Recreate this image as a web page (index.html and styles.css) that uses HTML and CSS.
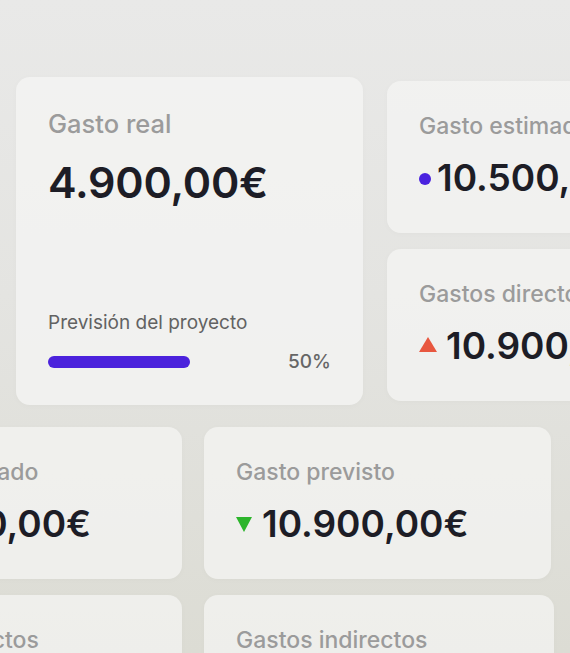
FILE: index.html
```html
<!DOCTYPE html>
<html lang="es">
<head>
<meta charset="utf-8">
<title>Gastos</title>
<link rel="stylesheet" href="styles.css">
</head>
<body>
<main class="canvas">
  <section class="row row-top">
    <article class="card card-big">
      <div class="card-head">
        <h2 class="label label-lg">Gasto real</h2>
        <p class="value value-lg">4.900,00€</p>
      </div>
      <div class="forecast">
        <p class="forecast-title">Previsión del proyecto</p>
        <div class="progress-row">
          <div class="progress-fill" style="width:50%"></div>
          <span class="percent">50%</span>
        </div>
      </div>
    </article>
    <div class="col">
      <article class="card">
        <h2 class="label">Gasto estimado</h2>
        <p class="value"><span class="dot"></span>10.500,00€</p>
      </article>
      <article class="card">
        <h2 class="label">Gastos directos</h2>
        <p class="value"><span class="tri tri-up"></span>10.900,00€</p>
      </article>
    </div>
  </section>
  <section class="row row-bottom">
    <div class="col">
      <article class="card">
        <h2 class="label">Gasto estimado</h2>
        <p class="value"><span class="dot"></span>10.500,00€</p>
      </article>
      <article class="card">
        <h2 class="label">Gastos directos</h2>
        <p class="value">10.900,00€</p>
      </article>
    </div>
    <div class="col">
      <article class="card">
        <h2 class="label">Gasto previsto</h2>
        <p class="value"><span class="tri tri-down"></span>10.900,00€</p>
      </article>
      <article class="card card-wide">
        <h2 class="label">Gastos indirectos</h2>
        <p class="value">10.900,00€</p>
      </article>
    </div>
  </section>
</main>
</body>
</html>
```

FILE: styles.css
```css
html, body {
  margin: 0;
  padding: 0;
  width: 570px;
  height: 653px;
  overflow: hidden;
}

body {
  font-family: "Inter", "Noto Sans", sans-serif;
  background: linear-gradient(180deg, #e9e9e8 0%, #e4e4e1 45%, #dcdcd4 100%);
  color: #1d1d26;
}

.canvas {
  padding-top: 77px;
}

.row {
  display: flex;
}

.row-top {
  margin-left: 16px;
  gap: 24px;
  align-items: center;
}

.row-bottom {
  margin-top: 22px;
  margin-left: -165px;
  gap: 22px;
}

.col {
  display: flex;
  flex-direction: column;
  gap: 16px;
  flex: none;
}

.card {
  box-sizing: border-box;
  width: 347px;
  flex: none;
  padding: 32px;
  border-radius: 14px;
  background: rgba(245, 245, 244, 0.72);
  box-shadow: 0 1px 6px rgba(0, 0, 0, 0.025);
  display: flex;
  flex-direction: column;
  gap: 15px;
}

.card-wide {
  width: 350px;
}

.card-big {
  height: 328px;
  justify-content: space-between;
  gap: 0;
  background: rgba(243, 243, 242, 0.85);
}

.card-head {
  display: flex;
  flex-direction: column;
  gap: 16px;
}

.label {
  margin: 0;
  font-size: 23px;
  font-weight: 500;
  line-height: 1.21;
  color: #9b9b9b;
  white-space: nowrap;
}

.label-lg {
  font-size: 25.5px;
}

.value {
  margin: 0;
  font-size: 37px;
  font-weight: 600;
  line-height: 1.21;
  color: #1d1d26;
  white-space: nowrap;
  display: flex;
  align-items: center;
  gap: 8px;
}

.value-lg {
  font-size: 43px;
  letter-spacing: -0.2px;
}

.dot {
  width: 12px;
  height: 12px;
  border-radius: 50%;
  background: #4a22df;
  flex: none;
  margin-right: -2px;
}

.tri {
  flex: none;
  width: 0;
  height: 0;
}

.tri-up {
  border-left: 9px solid transparent;
  border-right: 9px solid transparent;
  border-bottom: 15px solid #e8573f;
  margin-top: -3px;
  margin-right: 1px;
}

.tri-down {
  border-left: 8px solid transparent;
  border-right: 8px solid transparent;
  border-top: 15px solid #2db52c;
  margin-right: 2px;
}

.forecast {
  display: flex;
  flex-direction: column;
  gap: 16px;
}

.forecast-title {
  margin: 0;
  font-size: 19px;
  font-weight: 400;
  line-height: 1.21;
  color: #626262;
}

.progress-row {
  display: flex;
  align-items: center;
}

.progress-fill {
  height: 12px;
  border-radius: 6px;
  background: #4b22dc;
}

.percent {
  margin-left: auto;
  font-size: 19px;
  font-weight: 500;
  line-height: 1.21;
  color: #666666;
}
```
